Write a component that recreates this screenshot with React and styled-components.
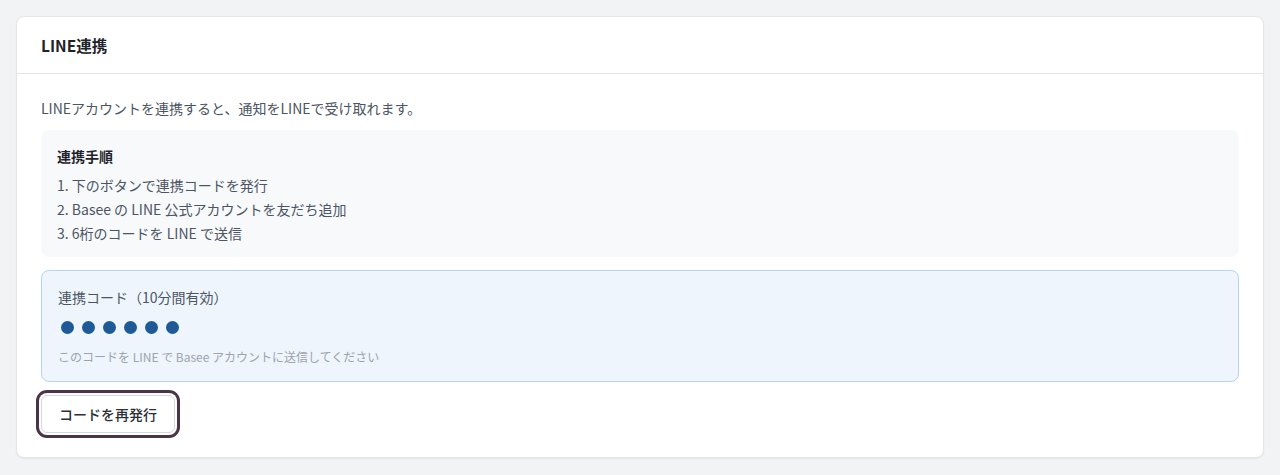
import React from "react";
import styled, { createGlobalStyle } from "styled-components";

const GlobalStyle = createGlobalStyle`
    html, body {
        margin: 0;
        padding: 0;
        background: #f2f3f5;
        font-family: "Noto Sans CJK JP", "Noto Sans", sans-serif;
    }
`;

const Page = styled.div`
    padding: 16px;
`;

const Card = styled.section`
    background: #ffffff;
    border: 1px solid #e3e5e9;
    border-radius: 8px;
    box-shadow: 0 1px 2px rgba(0, 0, 0, 0.06);
`;

const CardHeader = styled.header`
    display: flex;
    align-items: center;
    height: 56px;
    padding: 0 24px;
    border-bottom: 1px solid #e3e5e9;
`;

const CardTitle = styled.h2`
    margin: 0;
    font-size: 15.5px;
    font-weight: 700;
    color: #1f2329;
`;

const CardBody = styled.div`
    display: flex;
    flex-direction: column;
    align-items: flex-start;
    gap: 12px;
    padding: 24px;
`;

const Intro = styled.p`
    margin: 0;
    font-size: 14px;
    line-height: 20px;
    color: #4b5563;
`;

const StepsBox = styled.div`
    align-self: stretch;
    background: #f8f9fb;
    border-radius: 8px;
    padding: 16px 16px 12px;
`;

const StepsTitle = styled.div`
    font-size: 14px;
    font-weight: 700;
    line-height: 20px;
    color: #1f2329;
    margin-bottom: 7px;
`;

const StepsList = styled.ol`
    margin: 0;
    padding: 0;
    list-style: none;
`;

const Step = styled.li`
    font-size: 14px;
    line-height: 24px;
    color: #4b5563;
`;

const CodeBox = styled.div`
    align-self: stretch;
    margin-top: 1px;
    background: #eef5fc;
    border: 1px solid #b5d5ef;
    border-radius: 8px;
    padding: 16px 16px 15px;
`;

const CodeLabel = styled.div`
    font-size: 14px;
    line-height: 20px;
    color: #4b5563;
`;

const CodeDots = styled.div`
    display: flex;
    gap: 8px;
    margin: 14px 0 14px 3px;
`;

const Dot = styled.span`
    width: 13px;
    height: 13px;
    border-radius: 50%;
    background: #1d5a96;
`;

const Hint = styled.div`
    font-size: 12px;
    line-height: 18px;
    color: #9ca3af;
`;

const Button = styled.button`
    height: 38px;
    padding: 0 17px;
    margin-top: 1px;
    font-family: inherit;
    font-size: 14px;
    font-weight: 500;
    color: #2b2f36;
    background: #ffffff;
    border: 1px solid #d4d7dc;
    border-radius: 6px;
    box-shadow: 0 0 0 2px #ffffff, 0 0 0 5px #4b3446;
    cursor: pointer;
`;

const steps = [
    "1. 下のボタンで連携コードを発行",
    "2. Basee の LINE 公式アカウントを友だち追加",
    "3. 6桁のコードを LINE で送信",
];

const App = () => {
    return (
        <Page>
            <GlobalStyle />
            <Card>
                <CardHeader>
                    <CardTitle>LINE連携</CardTitle>
                </CardHeader>
                <CardBody>
                    <Intro>LINEアカウントを連携すると、通知をLINEで受け取れます。</Intro>
                    <StepsBox>
                        <StepsTitle>連携手順</StepsTitle>
                        <StepsList>
                            {steps.map((s) => (
                                <Step key={s}>{s}</Step>
                            ))}
                        </StepsList>
                    </StepsBox>
                    <CodeBox>
                        <CodeLabel>連携コード（10分間有効）</CodeLabel>
                        <CodeDots aria-label="●●●●●●">
                            {[0, 1, 2, 3, 4, 5].map((i) => (
                                <Dot key={i} />
                            ))}
                        </CodeDots>
                        <Hint>このコードを LINE で Basee アカウントに送信してください</Hint>
                    </CodeBox>
                    <Button>コードを再発行</Button>
                </CardBody>
            </Card>
        </Page>
    );
};

export default App;
